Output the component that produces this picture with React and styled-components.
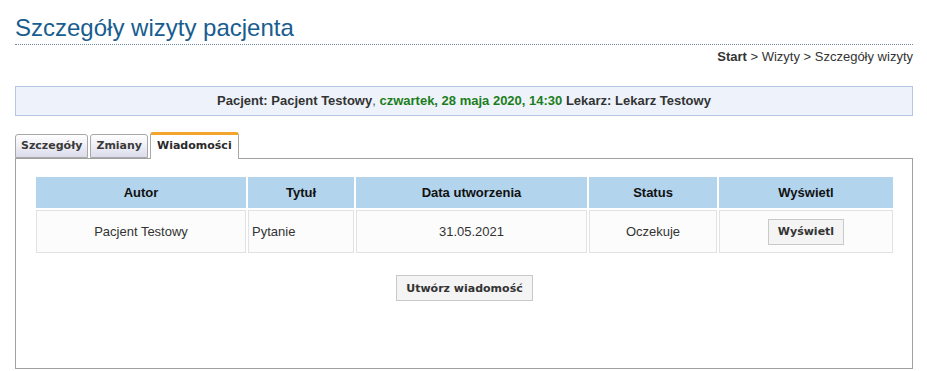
import React from 'react'
import styled, { createGlobalStyle } from 'styled-components'

const GlobalStyle = createGlobalStyle`
  body {
    margin: 0;
    background: #fff;
    font-family: "Liberation Sans", Arial, sans-serif;
    font-size: 13px;
    color: #333;
  }
`

const Page = styled.div`
  padding: 0 14px 0 15px;
`

const Title = styled.h1`
  margin: 14px 0 0;
  padding-bottom: 2px;
  font-size: 24px;
  line-height: 28px;
  font-weight: normal;
  color: #175d90;
  border-bottom: 1px dotted #6f8aa5;
`

const Breadcrumb = styled.div`
  margin-top: 4px;
  text-align: right;
  line-height: 16px;
  color: #333;

  b {
    font-weight: bold;
  }
`

const InfoBar = styled.div`
  margin-top: 21px;
  height: 28px;
  line-height: 28px;
  border: 1px solid #b5c8e3;
  background: #eef3fb;
  text-align: center;
  font-weight: bold;
  color: #333;
`

const Plain = styled.span`
  font-weight: normal;
  color: #555;
`

const Green = styled.span`
  color: #1b7d1b;
`

const TabBar = styled.div`
  margin-top: 16px;
  display: flex;
  align-items: flex-end;
  gap: 2px;
  height: 26px;
`

const Tab = styled.div`
  box-sizing: border-box;
  height: ${p => (p.$active ? '27px' : '24px')};
  margin-bottom: ${p => (p.$active ? '-1px' : '0')};
  padding: 0 ${p => (p.$active ? '6px' : '5px')};
  border: 1px solid #a8a8a8;
  border-top: ${p => (p.$active ? '3px solid #f3a42c' : '1px solid #a8a8a8')};
  border-bottom: ${p => (p.$active ? 'none' : '1px solid #a8a8a8')};
  border-radius: 3px 3px 0 0;
  background: ${p => (p.$active ? '#fff' : 'linear-gradient(#ffffff, #dcdcec)')};
  font-family: "DejaVu Sans", Verdana, sans-serif;
  font-size: 11px;
  font-weight: bold;
  line-height: 22px;
  color: ${p => (p.$active ? '#2a2a2a' : '#3a3a3a')};
  position: relative;
  z-index: 1;
`

const Panel = styled.div`
  border: 1px solid #a0a0a0;
  background: #fff;
  padding: 16px 17px 0 18px;
  height: 193px;
`

const Table = styled.table`
  table-layout: fixed;
  width: 861px;
  border-collapse: separate;
  border-spacing: 2px;
`

const Th = styled.th`
  box-sizing: border-box;
  width: ${p => p.$w}px;
  height: 31px;
  padding: 0;
  background: #b2d4ed;
  color: #111;
  font-size: 13px;
  font-weight: bold;
  text-align: center;
`

const Td = styled.td`
  box-sizing: border-box;
  height: 43px;
  padding: 0 3px;
  border: 1px solid #e2e2e2;
  background: #fcfcfc;
  text-align: ${p => p.$align || 'center'};
  color: #333;
`

const Button = styled.button`
  box-sizing: border-box;
  height: 26px;
  padding: 0 ${p => p.$pad || 10}px;
  border: 1px solid #c9c9c9;
  border-radius: 0;
  background: #f4f4f4;
  font-family: "DejaVu Sans", Verdana, sans-serif;
  font-size: 11px;
  font-weight: bold;
  color: #333;
`

const Actions = styled.div`
  display: flex;
  justify-content: center;
  margin-top: 20px;
`

const columns = [
  { label: 'Autor', w: 210 },
  { label: 'Tytuł', w: 106 },
  { label: 'Data utworzenia', w: 231 },
  { label: 'Status', w: 128 },
  { label: 'Wyświetl', w: 174 },
]

export default function App() {
  return (
    <Page>
      <GlobalStyle />
      <Title>Szczegóły wizyty pacjenta</Title>
      <Breadcrumb><b>Start</b> &gt; Wizyty &gt; Szczegóły wizyty</Breadcrumb>
      <InfoBar>
        Pacjent: Pacjent Testowy<Plain>, </Plain>
        <Green>czwartek, 28 maja 2020, 14:30</Green> Lekarz: Lekarz Testowy
      </InfoBar>
      <TabBar>
        <Tab>Szczegóły</Tab>
        <Tab>Zmiany</Tab>
        <Tab $active>Wiadomości</Tab>
      </TabBar>
      <Panel>
        <Table>
          <thead>
            <tr>
              {columns.map(c => <Th key={c.label} $w={c.w}>{c.label}</Th>)}
            </tr>
          </thead>
          <tbody>
            <tr>
              <Td>Pacjent Testowy</Td>
              <Td $align="left">Pytanie</Td>
              <Td>31.05.2021</Td>
              <Td>Oczekuje</Td>
              <Td><Button $pad={9}>Wyświetl</Button></Td>
            </tr>
          </tbody>
        </Table>
        <Actions>
          <Button $pad={9}>Utwórz wiadomość</Button>
        </Actions>
      </Panel>
    </Page>
  )
}
